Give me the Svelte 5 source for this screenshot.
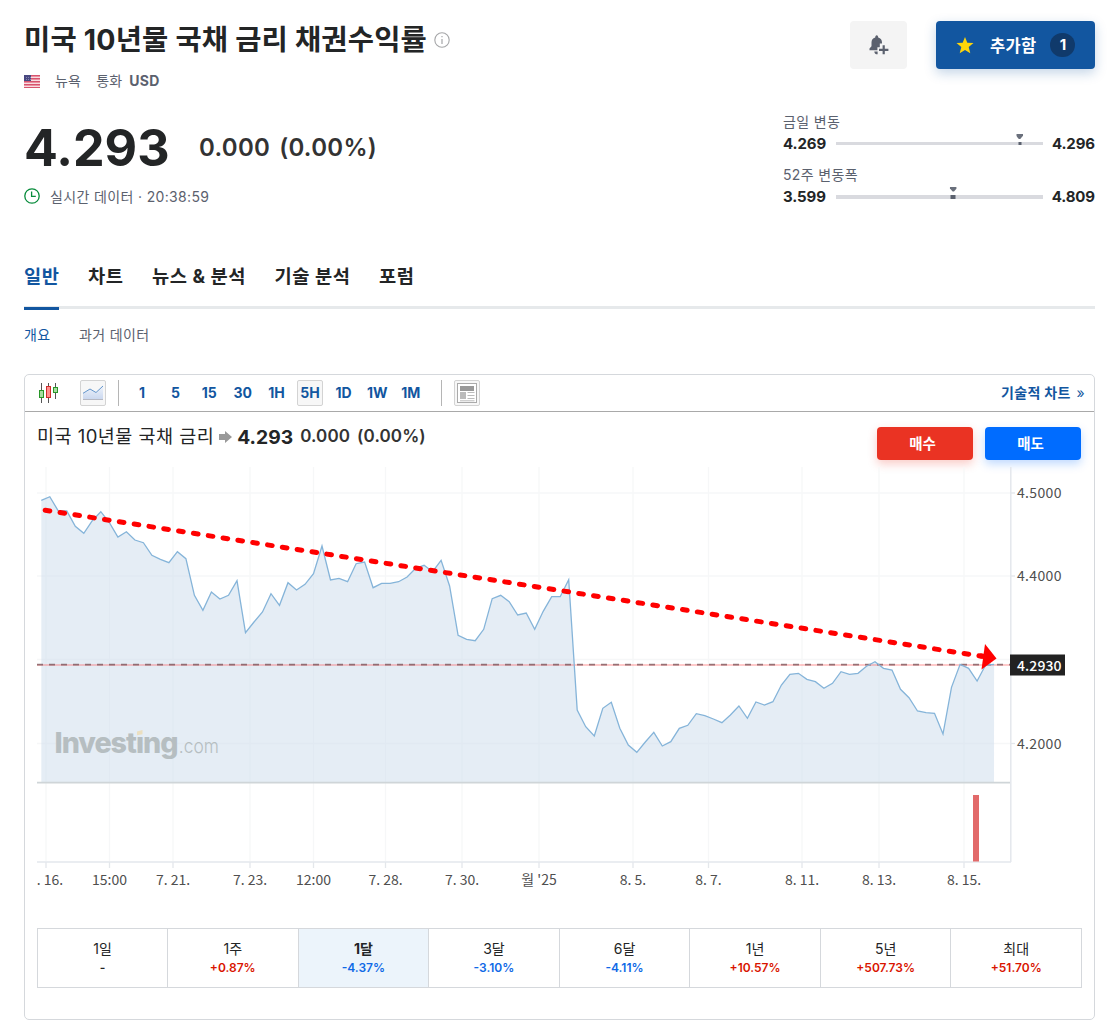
<script>
  const tabs = ['일반', '차트', '뉴스 & 분석', '기술 분석', '포럼'];
  const intervals = ['1', '5', '15', '30', '1H', '5H', '1D', '1W', '1M'];
  const ranges = [
    { label: '금일 변동', low: '4.269', high: '4.296', pos: 88.7, size: 'thin' },
    { label: '52주 변동폭', low: '3.599', high: '4.809', pos: 56.8, size: 'thick' },
  ];
  const periods = [
    { label: '1일', value: '-', tone: 'flat' },
    { label: '1주', value: '+0.87%', tone: 'up' },
    { label: '1달', value: '-4.37%', tone: 'down', active: true },
    { label: '3달', value: '-3.10%', tone: 'down' },
    { label: '6달', value: '-4.11%', tone: 'down' },
    { label: '1년', value: '+10.57%', tone: 'up' },
    { label: '5년', value: '+507.73%', tone: 'up' },
    { label: '최대', value: '+51.70%', tone: 'up' },
  ];

  const xTicks = [
    [46, '. 16.', 50], [109.5, '15:00'], [173, '7. 21.'], [250, '7. 23.'], [313.5, '12:00'],
    [385.5, '7. 28.'], [462, '7. 30.'], [539, "월 '25"], [633, '8. 5.'], [708.5, '8. 7.'],
    [802, '8. 11.'], [879, '8. 13.'], [964, '8. 15.'],
  ];
  const yTicks = [[493, '4.5000'], [576, '4.4000'], [659.5, ''], [743.5, '4.2000']];

  const series = [
    500.3, 496.7, 511, 511, 526.3, 533.3, 520.7, 511.7, 522.7, 537, 531.7, 540, 542.7, 555.3, 559.3,
    562.7, 551.7, 558.7, 595.3, 610.3, 592, 599, 595.3, 580.7, 632.7, 622, 612, 593.7, 605.3, 582.7,
    590, 584.3, 573.7, 546, 580, 578.3, 581.7, 563.7, 562, 587.7, 583.3, 583.3, 581.7, 577, 568.3,
    565.3, 571.7, 560.3, 586, 635.3, 639.3, 640.7, 629.3, 598.7, 595.3, 601.7, 615, 613, 629.3, 611.3,
    596.7, 596.7, 579.7, 710, 726.7, 736, 708.3, 702.3, 728.3, 745, 752.3, 742, 732.3, 746, 741.7,
    728.3, 725.3, 713.7, 715.7, 719, 722.7, 715, 706, 718.3, 702, 705, 701.7, 685, 674.3, 673.3,
    679.3, 681.7, 688.3, 683.3, 671.7, 674.3, 673.3, 666.3, 661.7, 668.3, 670, 689.3, 697.7, 711,
    712.7, 713.3, 734, 687.3, 664.3, 668.3, 681, 665, 664.3,
  ];
  const line = series.map((y, i) => `${(41.3 + i * 8.507).toFixed(1)},${y}`).join(' ');
</script>

<main>
  <header>
    <div class="heading">
      <h1>
        <span class="name">미국 10년물 국채 금리 채권수익률</span>
        <svg class="info" width="16" height="16" viewBox="0 0 16 16" fill="none" stroke="#a5a6a8">
          <circle cx="8" cy="8" r="7.2" stroke-width="1.1" />
          <path d="M8 7v5M8 4v1.2" stroke-width="1.2" />
        </svg>
      </h1>
      <div class="meta">
        <svg width="16" height="13" viewBox="0 0 16 13" shape-rendering="crispEdges">
          <rect width="16" height="13" fill="#ec8fa0" />
          <path d="M0 .5h16M0 3.5h16M0 6.5h16M0 9.5h16M0 12.5h16" stroke="#d6546e" />
          <path d="M0 2.5h16M0 5.5h16M0 8.5h16M0 11.5h16" stroke="#f7dce1" />
          <rect width="7" height="6" fill="#484881" />
          <path d="M1.5 2.5h5M1.5 4.5h5" stroke="#8583ae" stroke-dasharray="1 1" />
        </svg>
        <span class="city">뉴욕</span>
        <span class="cur">통화</span>
        <b>USD</b>
      </div>
    </div>
    <div class="actions">
      <button class="alert" aria-label="알림 추가">
        <svg width="20" height="20" viewBox="0 0 20 20" fill="#5b616e">
          <path d="M6.2 2.6C6.2 1.3 6.7.3 7.7.3s1.500 1 1.500 2.300c2.500.7 3.800 2.600 3.800 5v1h-2.200v3.600H8.400v3H.5v-1.600l2-2.400V7.600c0-2.400 1.200-4.300 3.700-5z" />
          <path d="M5.300 16.400h3.300v2.900c-1.800.1-3.200-1-3.300-2.900z" />
          <path d="M14.700 10.300v9M10 14.900h9.400" stroke="#5b616e" stroke-width="2.2" />
        </svg>
      </button>
      <button class="added">
        <svg width="18" height="17" viewBox="0 0 18 17" fill="#ffd60a">
          <path d="M9 0l2.300 5.700 6.200.4-4.800 3.900 1.600 6.200L9 12.900l-5.300 3.300L5.300 10 .5 6.100l6.200-.4z" />
        </svg>
        <span>추가함</span>
        <i>1</i>
      </button>
    </div>
  </header>

  <section class="quote">
    <div class="price-block">
      <div class="price">
        <strong>4.293</strong>
        <span class="change">0.000</span>
        <span class="pct">(0.00%)</span>
      </div>
      <div class="time">
        <svg width="16" height="16" viewBox="0 0 16 16" fill="none" stroke="#078b3b" stroke-width="1.3">
          <circle cx="8" cy="8" r="7.2" />
          <path d="M7.6 3.6v4.8h4.2" />
        </svg>
        <span>실시간 데이터 · <em>20:38:59</em></span>
      </div>
    </div>
    <div class="ranges">
      {#each ranges as r}
        <div class="range">
          <div class="range-label">{r.label}</div>
          <div class="range-row">
            <b>{r.low}</b>
            <div class="track {r.size}">
              <span class="marker" style="left: {r.pos}%"></span>
            </div>
            <b>{r.high}</b>
          </div>
        </div>
      {/each}
    </div>
  </section>

  <nav class="tabs">
    {#each tabs as tab, i}<a class:active={i === 0}>{tab}</a>{/each}
  </nav>
  <nav class="subtabs"><a class="active">개요</a><a>과거 데이터</a></nav>

  <section class="card">
    <div class="toolbar">
      <svg class="candles" width="22" height="22" viewBox="0 0 22 22">
        <path d="M4.500 1v20M18.500 1v16" stroke="#555" />
        <path d="M11.500 1v20" stroke="#555" />
        <rect x="2.500" y="8.500" width="4" height="7" fill="#a5dda0" stroke="#289628" />
        <rect x="9.500" y="4.500" width="4" height="11" fill="#ff8c8c" stroke="#ce2d2d" />
        <rect x="16.500" y="5.500" width="4" height="5" fill="#a5dda0" stroke="#289628" />
      </svg>
      <span class="tool area">
        <svg width="20" height="16" viewBox="0 0 20 16">
          <defs>
            <linearGradient id="tool-fill" x1="0" y1="0" x2="0" y2="1">
              <stop offset="0" stop-color="#eef3fb" />
              <stop offset="1" stop-color="#cbd8ef" />
            </linearGradient>
          </defs>
          <path d="M0 8.300L7 4l6 3.500L20 1v13H0z" fill="url(#tool-fill)" />
          <path d="M0 8.300L7 4l6 3.500L20 1" fill="none" stroke="#6395cb" />
          <path d="M0 14.500h20" stroke="#b6b8c2" />
        </svg>
      </span>
      <span class="divider"></span>
      <div class="intervals">
        {#each intervals as t}<span class:selected={t === '5H'}>{t}</span>{/each}
      </div>
      <span class="divider second"></span>
      <span class="tool news">
        <svg width="22" height="22" viewBox="0 0 22 22">
          <rect x="1.500" y="1.500" width="19" height="19" fill="#fff" stroke="#aaa" />
          <rect x="4" y="4" width="14" height="5" fill="#999" />
          <rect x="4" y="10" width="6" height="7" fill="#bbb" />
          <path d="M11.500 10.500h7M11.500 13.500h7M11.500 16.500h7M4 18.800h14.500" stroke="#bbb" />
        </svg>
      </span>
      <a class="technical">기술적 차트 <span>»</span></a>
    </div>

    <div class="summary">
      <span class="sname">미국 10년물 국채 금리</span>
      <svg width="13" height="12" viewBox="0 0 13 12" fill="#999"><path d="M0 3h6V0l7 6-7 6V9H0z" /></svg>
      <strong>4.293</strong>
      <b class="schange">0.000</b>
      <b class="spct">(0.00%)</b>
      <div class="trade">
        <button class="buy">매수</button>
        <button class="sell">매도</button>
      </div>
    </div>

    <svg class="chart" width="1045" height="434" viewBox="37 466 1045 434">
      <g stroke="#f6f7f8" stroke-width="1.3">
        {#each xTicks as [x]}<path d="M{x} 467V861" />{/each}
        {#each yTicks as [y]}<path d="M37 {y}H1010" />{/each}
      </g>
      <g stroke="#e4e7eb" stroke-width="1.3">
        {#each xTicks as [x]}<path d="M{x} 862v6" />{/each}
        {#each yTicks as [y]}<path d="M1011 {y}h4" />{/each}
      </g>
      <polygon points="41.3,782 {line} 994,782" fill="#cfdfec" fill-opacity=".55" />
      <path d="M37 664.9H1010" stroke="#ff5050" stroke-opacity=".3" stroke-width="2" />
      <path d="M37 664.6H1010" stroke="#6b4a50" stroke-opacity=".7" stroke-width="1.7" stroke-dasharray="6 6" />
      <polyline points={line} fill="none" stroke="#85b4d9" stroke-width="1.3" />
      <path d="M37 782.7H1010" stroke="#cfd5d8" stroke-width="1.8" />
      <path d="M1010.8 467V862M37 862H1011" stroke="#e4e7ed" stroke-width="1.5" fill="none" />
      <rect x="973" y="795" width="6" height="66.5" fill="#e26a6a" />

      <g class="brand">
        <text class="brand-name" x="54.5" y="753.2" textLength="123" lengthAdjust="spacingAndGlyphs">Investıng</text>
        <path d="M137 731.500l5.500-1.500v4.300l-5.500 1z" fill="#ebdfc0" />
        <text class="brand-com" x="178.8" y="753.2" textLength="40" lengthAdjust="spacingAndGlyphs">.com</text>
      </g>

      <path d="M45.200 510.200L982 656.300" stroke="#f00" stroke-width="5" stroke-linecap="round" stroke-dasharray="4.7 10.3" />
      <path d="M980 655.800L988 657" stroke="#f00" stroke-width="5" />
      <path d="M985 644L996.500 658.500 981.500 669.500z" fill="#f00" />

      <rect x="1010" y="654.5" width="55" height="21" fill="#222" />
      <g class="axis">
        {#each yTicks as [y, label]}
          {#if label}<text x="1017" y={y + 5} textLength="44.5">{label}</text>{/if}
        {/each}
        <text x="1017" y="671" class="last" textLength="44.5">4.2930</text>
        {#each xTicks as [x, label, lx]}<text x={lx ?? x} y="885" text-anchor="middle">{label}</text>{/each}
      </g>
    </svg>

    <div class="periods">
      {#each periods as p}
        <div class="period" class:active={p.active}>
          <span>{p.label}</span>
          <b class={p.tone}>{p.value}</b>
        </div>
      {/each}
    </div>
  </section>
</main>

<style>
  :global(body) { background: #fff; }
  * { box-sizing: border-box; }
  main {
    width: 1111px;
    height: 1028px;
    padding: 0 16px 0 24px;
    overflow: hidden;
    font-family: Inter, 'Noto Sans CJK KR', sans-serif;
    color: #232526;
    white-space: nowrap;
  }
  button { border: 0; padding: 0; font: inherit; }
  svg { display: block; flex: none; }
  header { display: flex; justify-content: space-between; height: 117px; padding-top: 21px; }
  h1 { display: flex; align-items: center; gap: 7px; margin: 0; height: 38px; font-size: 28.5px; line-height: 38px; font-weight: 700; letter-spacing: .19px; }
  .meta { display: flex; align-items: center; height: 20px; margin-top: 12px; font-size: 14px; line-height: 20px; color: #5b616e; }
  .city { margin-left: 15px; letter-spacing: .2px; }
  .cur { margin: 0 7px 0 15px; letter-spacing: .2px; }
  .meta b { font-weight: 700; letter-spacing: .2px; }
  .actions { display: flex; gap: 29px; }
  .alert { display: grid; place-items: center; width: 57px; height: 48px; border-radius: 4px; background: #f4f4f4; }
  .added {
    display: flex; align-items: center; width: 159px; height: 48px; padding-left: 20px; border-radius: 4px;
    background: #1256a0; color: #fff; font-size: 16px; font-weight: 700; box-shadow: 0 4px 12px rgba(18, 86, 160, .25);
  }
  .added span { margin: -1px 0 0 16px; font-size: 16.5px; letter-spacing: .3px; }
  .added i { display: grid; place-items: center; width: 25px; height: 24px; margin-left: 14px; border-radius: 12px; background: #103a6b; font-style: normal; font-size: 15px; line-height: 24px; }

  .quote { display: flex; justify-content: space-between; height: 131px; }
  .price { display: flex; align-items: center; height: 62px; }
  .price strong { width: 175px; font-size: 50.2px; line-height: 62px; }
  .change, .pct { font-size: 24px; line-height: 30px; font-weight: 600; color: #333; letter-spacing: .3px; }
  .pct { margin-left: 9px; }
  .time { display: flex; align-items: center; gap: 10px; height: 20px; margin-top: 7px; font-size: 14px; line-height: 20px; letter-spacing: .35px; color: #5b616e; }
  .time span { margin-top: 2px; }
  .time em { font-style: normal; }
  .ranges { width: 312px; margin-top: -4px; }
  .range { height: 53px; }
  .range-label { height: 17px; font-size: 14px; line-height: 17px; letter-spacing: .35px; color: #5b616e; }
  .range-row { display: flex; align-items: center; height: 18px; margin-top: 5px; font-size: 15px; line-height: 18px; }
  .range-row b { font-weight: 650; letter-spacing: -.1px; }
  .track { position: relative; flex: 1; height: 3px; margin: -1px 9px 0 10px; background: #d9dadf; }
  .track.thick { height: 4px; }
  .marker { position: absolute; top: 0; width: 3px; height: 100%; background: #5b616e; transform: translateX(-50%); }
  .thick .marker { width: 5px; }
  .marker::before {
    content: ''; position: absolute; left: 50%; top: -8px; margin-left: -3.5px; width: 7px; height: 5px;
    background: #6a707c; clip-path: polygon(0 0, 100% 0, 100% 35%, 60% 100%, 40% 100%, 0 35%);
  }

  .tabs { display: flex; gap: 28.5px; height: 61px; border-bottom: 3px solid #e6e9eb; font-size: 18.7px; letter-spacing: .55px; font-weight: 700; }
  .tabs a { height: 62px; padding-top: 15px; line-height: 28px; }
  .tabs .active { color: #1256a0; border-bottom: 3px solid #1256a0; width: 35px; margin-right: .5px; }
  .subtabs { display: flex; gap: 28.5px; height: 65px; padding-top: 16px; font-size: 14px; line-height: 20px; letter-spacing: .35px; color: #5b616e; }
  .subtabs .active { color: #1256a0; }

  .card { width: 1071px; height: 646px; border: 1px solid #d5d8dc; border-radius: 5px; }
  .toolbar { display: flex; align-items: center; height: 37px; padding: 0 9px 0 12px; border-bottom: 1px solid #a9a9a9; }
  .tool { display: grid; place-items: center; width: 26px; height: 26px; border: 1px solid #d3d3d3; border-radius: 2px; background: #f7f7f7; }
  .area { margin-left: 21px; }
  .divider { width: 1px; height: 26px; margin: 0 10px 0 12px; background: #b5b5b5; }
  .second { margin: 0 12px 0 17px; }
  .intervals { display: flex; gap: 7.6px; }
  .intervals span { width: 26px; height: 26px; border: 1px solid transparent; border-radius: 2px; text-align: center; font-size: 14px; line-height: 24px; font-weight: 700; color: #1256a0; }
  .intervals .selected { border-color: #d3d3d3; background: #f7f7f7; }
  .technical { margin: -3px 0 0 auto; font-size: 14px; letter-spacing: .35px; font-weight: 700; color: #1256a0; }
  .technical span { margin-left: 2px; font-weight: 400; }

  .summary { display: flex; align-items: center; height: 48px; padding: 0 13px 0 12px; margin-bottom: 6px; font-size: 18.5px; line-height: 24px; }
  .summary > * { flex: none; }
  .sname { letter-spacing: .48px; }
  .summary svg { margin: 1px 5px 0 5px; }
  .summary strong { margin-top: 2px; font-size: 19.3px; }
  .summary .schange, .summary .spct { font-size: 17px; font-weight: 600; color: #333; margin-left: 7px; letter-spacing: .12px; }
  .summary .trade { display: flex; gap: 12px; margin: 15px 0 0 auto; }
  .trade button { width: 96px; height: 33px; padding: 1px 5px 0 0; border-radius: 4px; color: #fff; font-size: 14.5px; font-weight: 700; }
  .buy { background: #ea3323; box-shadow: 0 4px 10px rgba(234, 51, 35, .25); }
  .sell { background: #006cff; box-shadow: 0 4px 10px rgba(0, 108, 255, .25); }

  .chart { margin-left: 12px; }
  .axis text { font: 14px 'Noto Sans CJK KR', sans-serif; fill: #4f4f4f; }
  .axis .last { fill: #fff; font-weight: 500; }
  .brand { fill: #b6bec1; }
  .brand-name { font: 800 28px Inter, sans-serif; letter-spacing: -1px; }
  .brand-com { font: 300 20px Inter, sans-serif; }

  .periods { display: grid; grid-template-columns: 129px repeat(7, 1fr); width: 1045px; height: 60px; margin: 28px 0 0 12px; border: 1px solid #d5d8dc; }
  .period { display: flex; flex-direction: column; align-items: center; padding-top: 10px; border-left: 1px solid #d5d8dc; font-size: 14px; line-height: 20px; }
  .period:first-child { border-left: 0; }
  .period.active { background: #ecf4fb; }
  .period.active span { font-weight: 700; }
  .period b { font-size: 12px; line-height: 18px; font-weight: 600; }
  .up { color: #d91400; }
  .down { color: #0f69e6; }
</style>
